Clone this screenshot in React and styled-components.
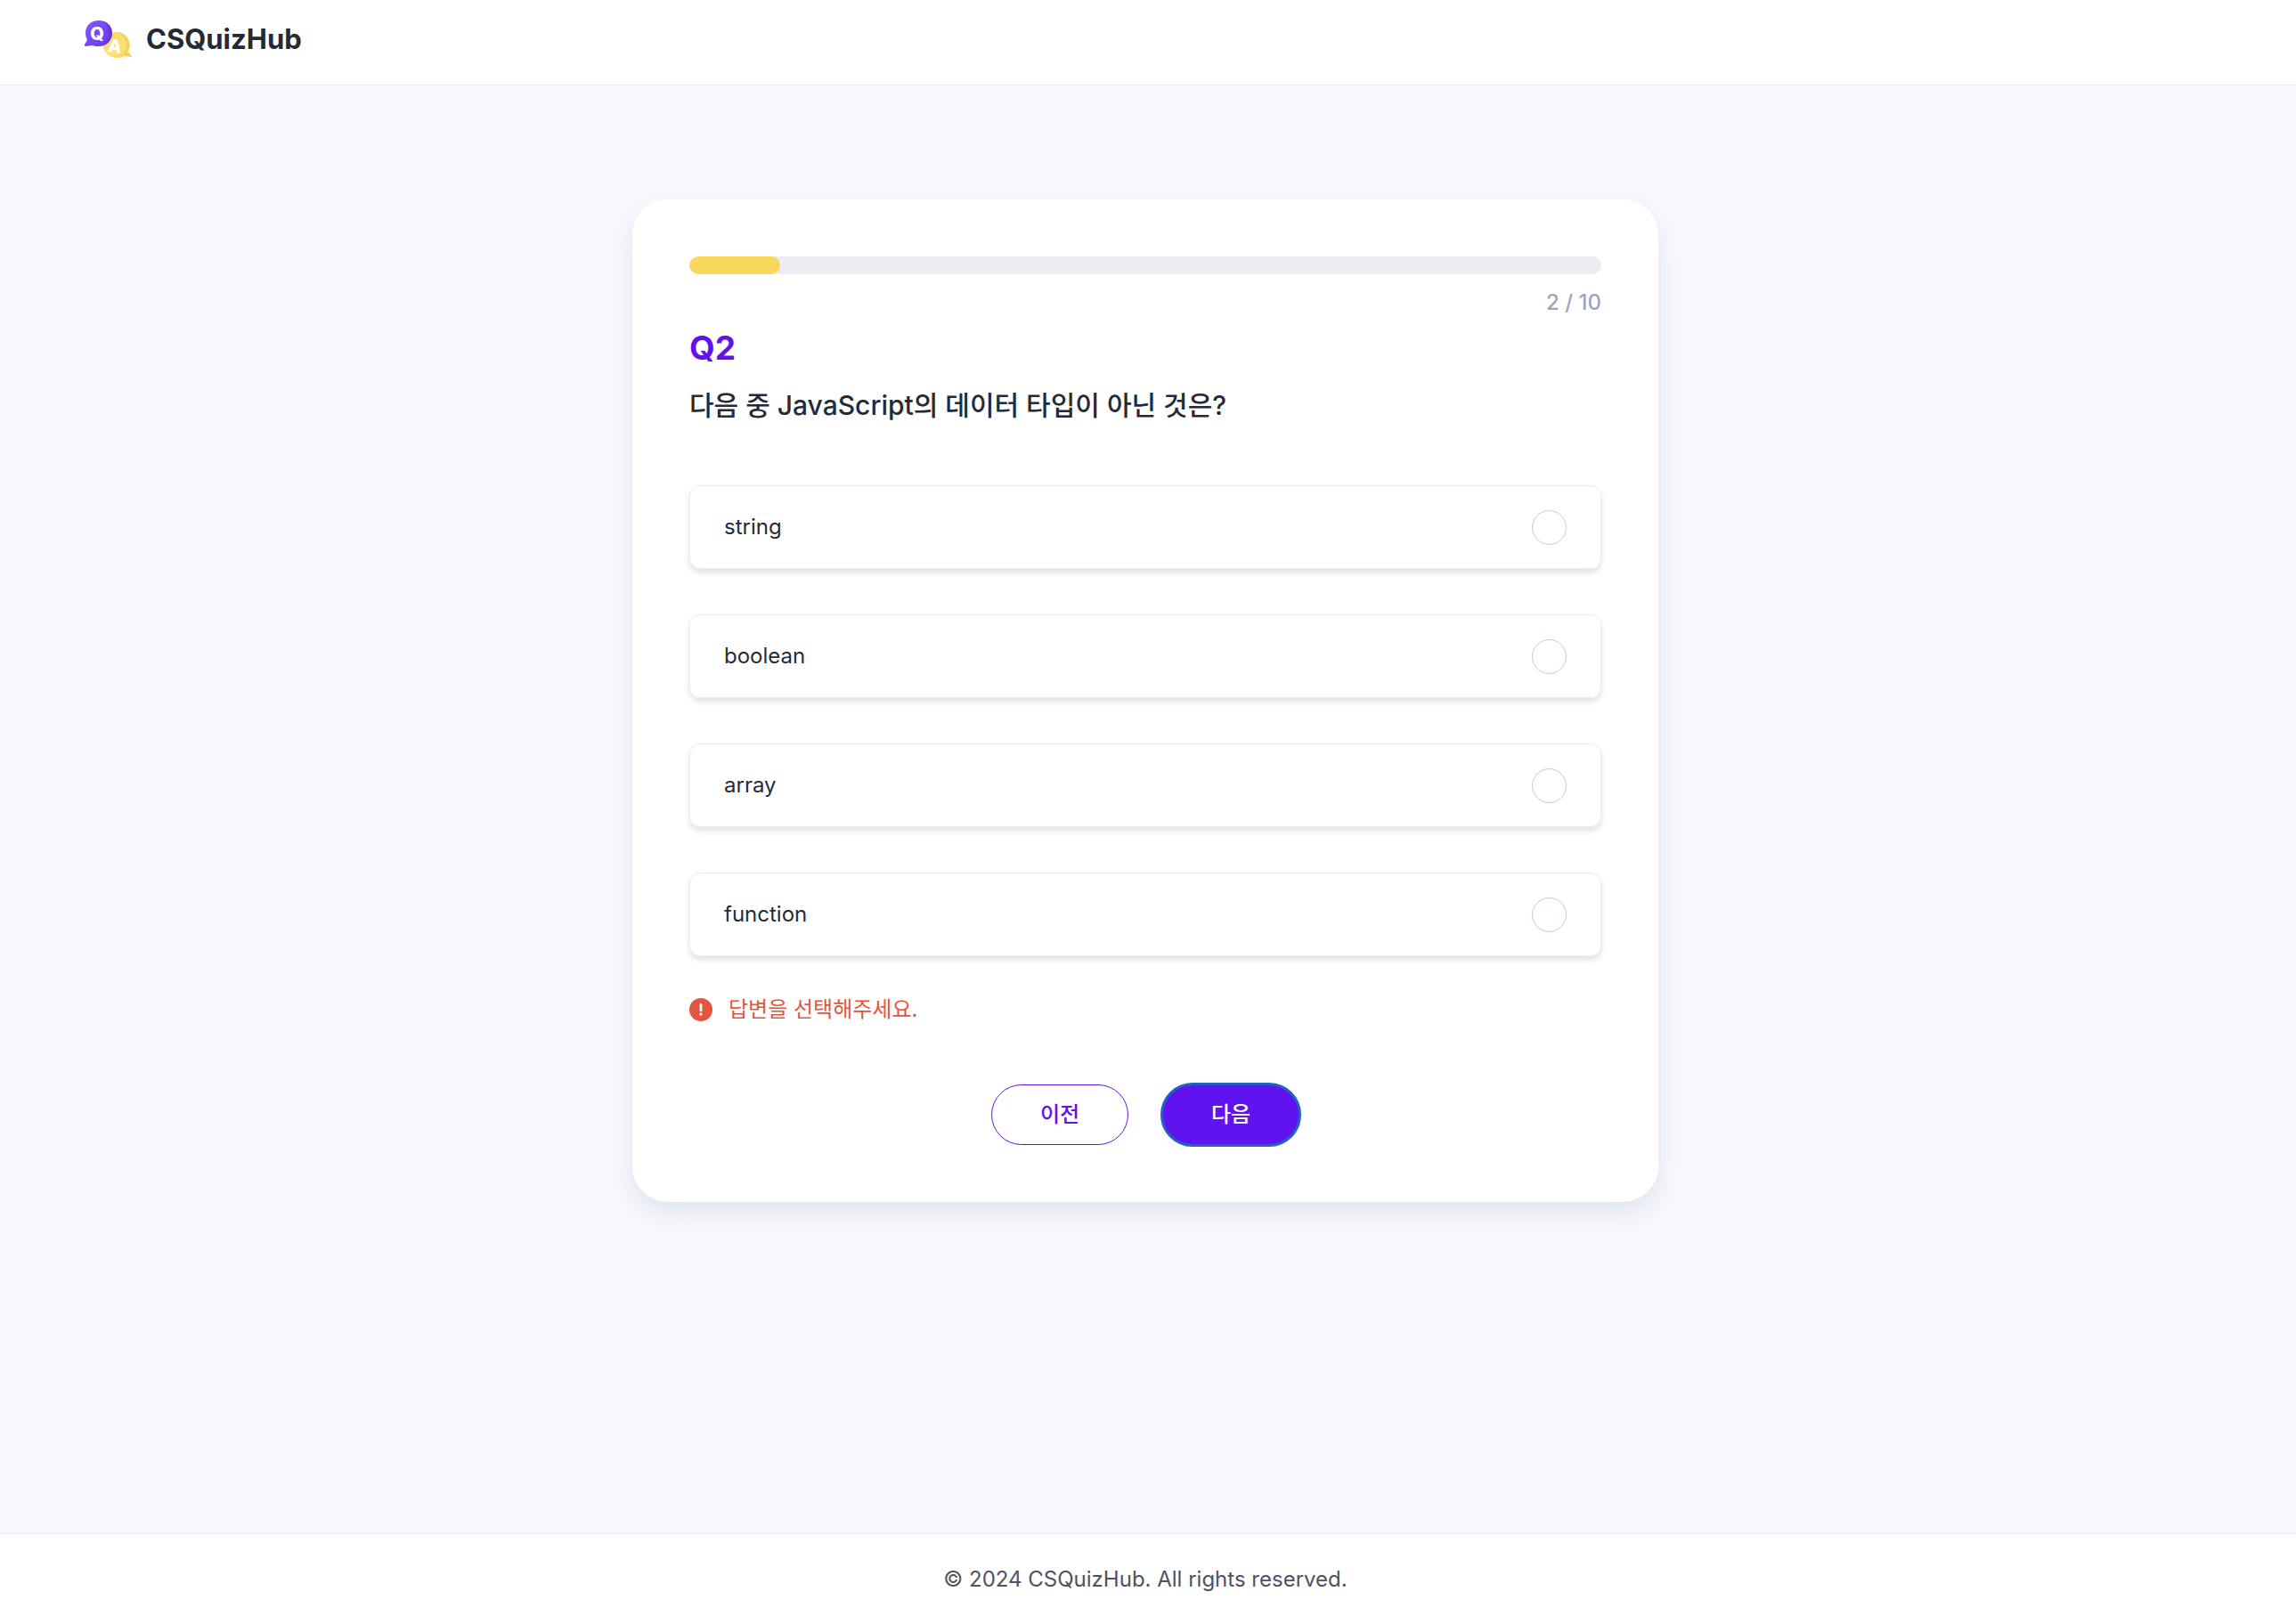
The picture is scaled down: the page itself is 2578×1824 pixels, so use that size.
import React, { useState } from "react";
import styled, { createGlobalStyle } from "styled-components";

const GlobalStyle = createGlobalStyle`
  *, *::before, *::after { box-sizing: border-box; }
  body {
    margin: 0;
    background: #f8f9fe;
    color: #242b37;
    font-family: Inter, "Noto Sans CJK KR", sans-serif;
    font-size: 24px;
    line-height: 32px;
  }
  button, input { font: inherit; }
`;

const Page = styled.div`
  display: flex;
  flex-direction: column;
  min-height: 100vh;
`;

const Header = styled.header`
  padding: 22px 94px 29px;
  background: #fff;
  border-bottom: 1px solid #ebecf2;
`;

const Brand = styled.a`
  display: inline-flex;
  align-items: center;
  gap: 15px;
  color: inherit;
  font-size: 31px;
  font-weight: 700;
  line-height: 44px;
  text-decoration: none;
  vertical-align: top;
`;

const Logo = styled.svg`
  width: 55px;
  height: 44px;
`;

const Main = styled.main`
  flex: 1;
  display: flex;
  justify-content: center;
  align-items: flex-start;
  padding: 128px 38px 128px 32px;
`;

const Card = styled.form`
  width: 100%;
  max-width: 1152px;
  padding: 64px;
  border-radius: 40px;
  background: #fff;
  box-shadow: 0 12px 28px rgba(40, 72, 119, 0.12);
`;

const Progress = styled.div`
  height: 20px;
  border-radius: 10px;
  overflow: hidden;
  background: #ecedf2;
`;

const ProgressFill = styled.div`
  height: 100%;
  border-radius: 10px;
  background: #fad85d;
`;

const Counter = styled.p`
  margin: 16px 0 0;
  color: #9fa4b7;
  font-weight: 500;
  text-align: right;
`;

const Number = styled.h1`
  margin: 12px 0 0;
  color: #6013ee;
  font-size: 37px;
  font-weight: 700;
  line-height: 46px;
`;

const Question = styled.h2`
  margin: 19px 0 68px;
  font-size: 30px;
  font-weight: 500;
  line-height: 44px;
`;

const Options = styled.div`
  display: grid;
  gap: 51px;
`;

const Option = styled.label`
  display: flex;
  align-items: center;
  justify-content: space-between;
  min-height: 94px;
  padding: 0 38px;
  border: 1px solid #ebecf2;
  border-radius: 12px;
  box-shadow: 0 4px 6px rgba(36, 43, 80, 0.14);
  cursor: pointer;
`;

const Radio = styled.input`
  appearance: none;
  width: 39px;
  height: 39px;
  margin: 0;
  border: 1px solid #c6cae0;
  border-radius: 50%;
  &:checked { border: 12px solid #6013ee; }
`;

const Message = styled.p`
  display: flex;
  align-items: center;
  gap: 18px;
  margin: 44px 0 68px;
  color: #e25541;
`;

const Actions = styled.div`
  display: flex;
  justify-content: center;
  gap: 38px;
`;

const Button = styled.button`
  width: 154px;
  height: 68px;
  padding: 0;
  border: 1px solid #6013ee;
  border-radius: 34px;
  background: ${(p) => (p.$primary ? "#6013ee" : "#fff")};
  color: ${(p) => (p.$primary ? "#fff" : "#6013ee")};
  font-weight: 500;
  outline: ${(p) => (p.$primary ? "3px solid #2360c5" : "none")};
  outline-offset: -1px;
`;

const Footer = styled.footer`
  padding: 35px 38px 34px 32px;
  border-top: 1px solid #ebecf2;
  background: #fff;
  color: #4c5362;
  text-align: center;
`;

const LogoMark = () => (
  <Logo viewBox="0 0 55 44" aria-hidden="true">
    <defs>
      <linearGradient id="violet" x1="0" y1="0" x2="1" y2="1">
        <stop offset="0" stopColor="#8558fa" />
        <stop offset="1" stopColor="#6a38ea" />
      </linearGradient>
      <linearGradient id="yellow" x1="0" y1="0" x2="1" y2="1">
        <stop offset="0" stopColor="#f2d568" />
        <stop offset="0.6" stopColor="#fde374" />
        <stop offset="1" stopColor="#f3d25f" />
      </linearGradient>
    </defs>
    <path d="M37 14c9 0 15 7 15 15 0 3-1 5-2 7l4 5c0 1-1 1-2 1l-6-1c-3 2-6 2-9 2-8 0-15-6-15-14s7-15 15-15Z" fill="url(#yellow)" />
    <path d="M38 14c8 1 13 7 13 15 0 3-1 6-3 8l3 4-7-2c3-4 5-8 3-14-1-5-4-8-9-11Z" fill="#eac452" opacity=".5" />
    <path d="M17 1c9 0 15 6 15 14S26 30 17 30c-3 0-5 0-7-1l-8 1c-1 0-1-1-1-2l3-5c-1-2-2-5-2-8C2 7 8 1 17 1Z" fill="url(#violet)" />
    <path d="M21 2c7 2 11 7 11 13S27 29 19 30c6-3 9-8 9-14S26 5 21 2Z" fill="#5625cf" opacity=".45" />
    <text x="15" y="23" textAnchor="middle" fontSize="20" fontWeight="800" fill="#fff">Q</text>
    <text x="35" y="37" textAnchor="middle" fontSize="20" fontWeight="800" fill="#fff" transform="rotate(6 35 30)">A</text>
  </Logo>
);

const AlertIcon = () => (
  <svg width="26" height="26" viewBox="0 0 26 26" aria-hidden="true">
    <circle cx="13" cy="13" r="13" fill="#e25541" />
    <path d="M13 7.5v6.5" stroke="#fff" strokeWidth="2.8" strokeLinecap="round" />
    <circle cx="13" cy="18" r="1.6" fill="#fff" />
  </svg>
);

const answers = ["string", "boolean", "array", "function"];

export default function App() {
  const [current] = useState(2);
  const total = 10;
  const [choice, setChoice] = useState(null);
  const done = ((current - 1) / total) * 100;

  return (
    <Page>
      <GlobalStyle />
      <Header>
        <Brand href="#">
          <LogoMark />
          CSQuizHub
        </Brand>
      </Header>
      <Main>
        <Card onSubmit={(e) => e.preventDefault()}>
          <Progress>
            <ProgressFill style={{ width: `${done}%` }} />
          </Progress>
          <Counter>{`${current} / ${total}`}</Counter>
          <Number>{`Q${current}`}</Number>
          <Question id="question">다음 중 JavaScript의 데이터 타입이 아닌 것은?</Question>
          <Options role="radiogroup" aria-labelledby="question">
            {answers.map((a) => (
              <Option key={a} htmlFor={a}>
                {a}
                <Radio id={a} type="radio" name="answer" checked={choice === a} onChange={() => setChoice(a)} />
              </Option>
            ))}
          </Options>
          <Message role="alert">
            <AlertIcon />
            답변을 선택해주세요.
          </Message>
          <Actions>
            <Button type="button">이전</Button>
            <Button type="submit" $primary>다음</Button>
          </Actions>
        </Card>
      </Main>
      <Footer>© 2024 CSQuizHub. All rights reserved.</Footer>
    </Page>
  );
}
